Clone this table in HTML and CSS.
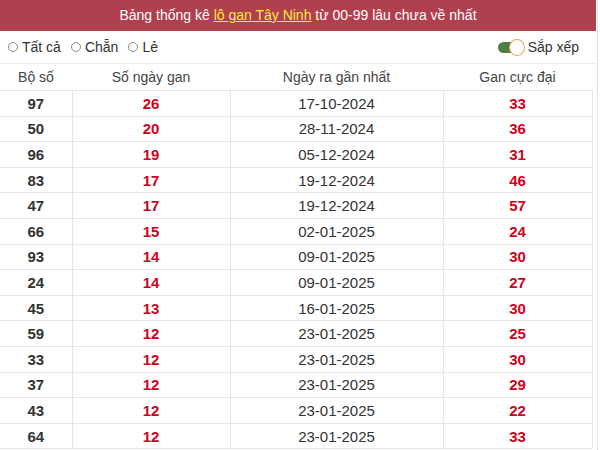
FILE: index.html
```html
<!DOCTYPE html>
<html lang="vi">
<head>
<meta charset="utf-8">
<link rel="stylesheet" href="styles.css">
</head>
<body>
<div class="page">
  <div class="title">Bảng thống kê <a href="#" class="title-link">lô gan Tây Ninh</a> từ 00-99 lâu chưa về nhất</div>
  <div class="filters">
    <label class="opt"><span class="radio"></span>Tất cả</label>
    <label class="opt"><span class="radio"></span>Chẵn</label>
    <label class="opt"><span class="radio"></span>Lẻ</label>
    <div class="sort">
      <span class="toggle"><span class="knob"></span></span>
      <span>Sắp xếp</span>
    </div>
  </div>
  <table class="stats">
    <colgroup><col class="c1"><col class="c2"><col class="c3"><col class="c4"></colgroup>
    <thead>
      <tr><th>Bộ số</th><th>Số ngày gan</th><th>Ngày ra gần nhất</th><th>Gan cực đại</th></tr>
    </thead>
    <tbody>
      <tr><td class="num">97</td><td class="red">26</td><td class="date">17-10-2024</td><td class="red">33</td></tr>
      <tr><td class="num">50</td><td class="red">20</td><td class="date">28-11-2024</td><td class="red">36</td></tr>
      <tr><td class="num">96</td><td class="red">19</td><td class="date">05-12-2024</td><td class="red">31</td></tr>
      <tr><td class="num">83</td><td class="red">17</td><td class="date">19-12-2024</td><td class="red">46</td></tr>
      <tr><td class="num">47</td><td class="red">17</td><td class="date">19-12-2024</td><td class="red">57</td></tr>
      <tr><td class="num">66</td><td class="red">15</td><td class="date">02-01-2025</td><td class="red">24</td></tr>
      <tr><td class="num">93</td><td class="red">14</td><td class="date">09-01-2025</td><td class="red">30</td></tr>
      <tr><td class="num">24</td><td class="red">14</td><td class="date">09-01-2025</td><td class="red">27</td></tr>
      <tr><td class="num">45</td><td class="red">13</td><td class="date">16-01-2025</td><td class="red">30</td></tr>
      <tr><td class="num">59</td><td class="red">12</td><td class="date">23-01-2025</td><td class="red">25</td></tr>
      <tr><td class="num">33</td><td class="red">12</td><td class="date">23-01-2025</td><td class="red">30</td></tr>
      <tr><td class="num">37</td><td class="red">12</td><td class="date">23-01-2025</td><td class="red">29</td></tr>
      <tr><td class="num">43</td><td class="red">12</td><td class="date">23-01-2025</td><td class="red">22</td></tr>
      <tr><td class="num">64</td><td class="red">12</td><td class="date">23-01-2025</td><td class="red">33</td></tr>
    </tbody>
  </table>
</div>
</body>
</html>
```
FILE: styles.css
```css
html, body {
  margin: 0;
  padding: 0;
  background: #fff;
}
body {
  font-family: "Liberation Sans", Arial, sans-serif;
  color: #333;
}
.page {
  width: 596px;
  box-shadow: 1px 0 0 #fff, 2px 0 0 #e2e2e2;
  overflow: hidden;
  height: 450px;
}
.title {
  background: #b1404f;
  color: #fff;
  text-align: center;
  font-size: 14px;
  height: 31px;
  line-height: 31px;
}
.title-link {
  color: #ffea3a;
  text-decoration: underline;
}
.filters {
  display: flex;
  align-items: center;
  height: 32px;
  padding: 0 17px 0 8px;
  font-size: 14px;
  color: #333;
  border-bottom: 1px solid #ececec;
}
.opt {
  display: flex;
  align-items: center;
  margin-right: 10px;
}
.radio {
  width: 8px;
  height: 8px;
  border: 1px solid #8a8a8a;
  border-radius: 50%;
  margin-right: 4px;
}
.sort {
  margin-left: auto;
  display: flex;
  align-items: center;
  gap: 5px;
}
.toggle {
  position: relative;
  width: 25px;
  height: 11px;
  border-radius: 6px;
  background: #4f7d45;
}
.knob {
  position: absolute;
  right: -2px;
  top: -3px;
  width: 14px;
  height: 15px;
  border-radius: 50%;
  background: #fff;
  border: 1px solid #e5a55a;
}
.stats {
  width: 592px;
  border-collapse: collapse;
  table-layout: fixed;
}
.c1 { width: 72px; }
.c2 { width: 158px; }
.c3 { width: 213px; }
.c4 { width: 149px; }
.stats th {
  font-weight: normal;
  font-size: 14px;
  color: #444;
  height: 26px;
  text-align: center;
  border-bottom: 1px solid #e6e6e6;
  padding: 0;
}
.stats td {
  height: 24.6px;
  padding: 0;
  text-align: center;
  border: 1px solid #e6e6e6;
  border-top: none;
  font-size: 15px;
}
.stats td:first-child { border-left: none; }
.stats td:last-child { border-right: 1px solid #e6e6e6; }
.num { font-weight: bold; color: #333; }
.red { font-weight: bold; color: #d0021b; }
.date { font-size: 16px; color: #333; }
```
